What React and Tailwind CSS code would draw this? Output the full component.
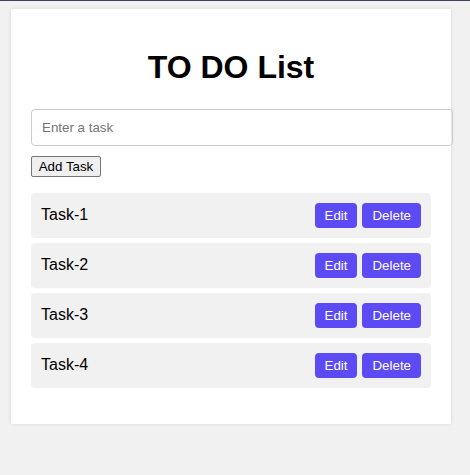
export default function App() {
  const tasks = ["Task-1", "Task-2", "Task-3", "Task-4"];
  return (
    <div className="min-h-[475px] w-full bg-[#f1f1f1] border-t border-[#3b4457] pt-[8px] pl-[11px] font-['Liberation_Sans',Arial,sans-serif]">
      <div className="w-[440px] bg-white shadow-[0_0_4px_rgba(0,0,0,0.1)] px-[20px] pt-[20px] pb-[36px]">
        <h1 className="mt-[19.5px] mb-[23px] text-center text-[32px] leading-[37px] font-bold text-black">
          TO DO List
        </h1>
        <input
          type="text"
          placeholder="Enter a task"
          className="box-content block w-full h-[15px] px-[10px] py-[10px] border border-[#cccccc] rounded-[4px] text-[13.33px] leading-[15px] placeholder:text-[#757575] outline-none"
        />
        <button className="mt-[10px] block h-[21px] w-[70px] bg-[#efefef] border border-[#767676] rounded-[2px] text-[13.33px] leading-[15px] text-black">
          Add Task
        </button>
        <ul className="mt-[16px] flex flex-col gap-[5px]">
          {tasks.map((t) => (
            <li
              key={t}
              className="h-[45px] flex items-center justify-between bg-[#f1f1f1] rounded-[4px] px-[10px]"
            >
              <span className="text-[16px] leading-[18px] text-black">{t}</span>
              <div className="flex gap-[5px]">
                <button className="h-[25px] px-[10px] bg-[#5c4bf4] text-white rounded-[4px] text-[13.33px] leading-[15px]">
                  Edit
                </button>
                <button className="h-[25px] px-[10px] bg-[#5c4bf4] text-white rounded-[4px] text-[13.33px] leading-[15px]">
                  Delete
                </button>
              </div>
            </li>
          ))}
        </ul>
      </div>
    </div>
  );
}
